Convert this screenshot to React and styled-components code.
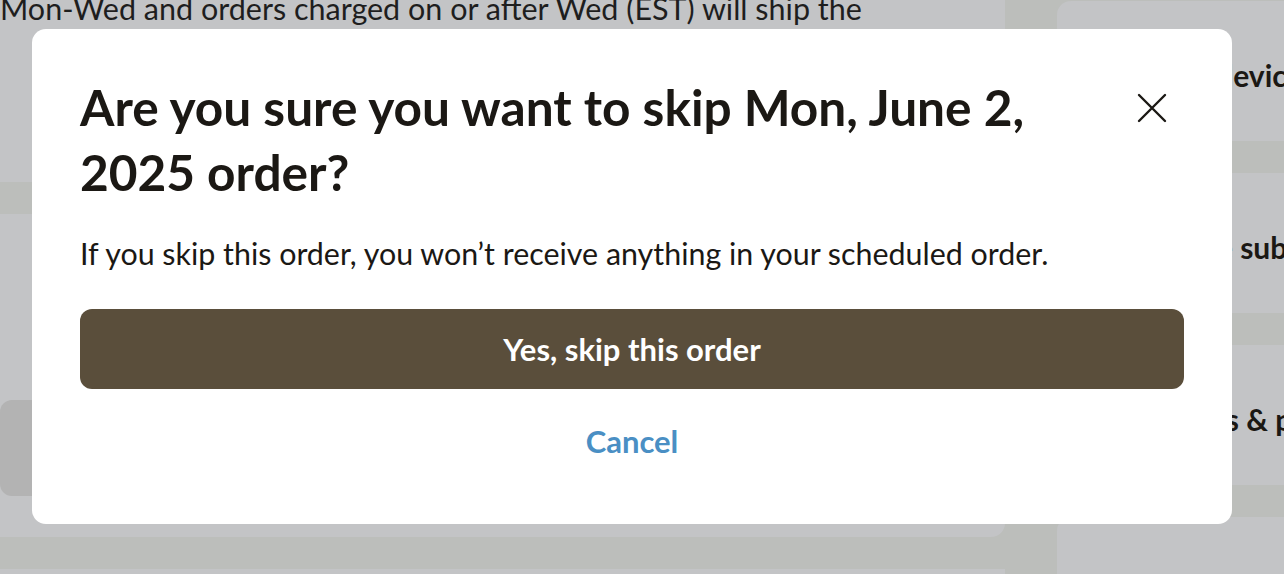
import styled, { createGlobalStyle } from "styled-components";

const GlobalStyle = createGlobalStyle`
  html, body {
    margin: 0;
    padding: 0;
    overflow: hidden;
    background: #bcbebb;
    font-family: "Lato", "Noto Sans", sans-serif;
    color: #1b1814;
  }
`;

const Page = styled.div`
  display: grid;
  grid-template-columns: 1005px 1fr;
  column-gap: 52px;
  height: 574px;
  overflow: hidden;
`;

const MainColumn = styled.div`
  display: flex;
  flex-direction: column;
  gap: 32px;
`;

const Panel = styled.section`
  flex-shrink: 0;
  background: #c3c4c6;
  border-radius: 0 0 14px 0;
  height: ${(p) => p.$height}px;
  padding-top: ${(p) => p.$padTop || 0}px;
  box-sizing: border-box;
  overflow: hidden;
`;

const Note = styled.p`
  margin: -46px 0 0;
  font-size: 30.5px;
  line-height: 36px;
  white-space: nowrap;
  color: #1e1e1e;
`;

const GreyBlock = styled.div`
  width: 300px;
  height: 96px;
  background: #b3b3b3;
  border-radius: 12px;
`;

const SideColumn = styled.div`
  display: flex;
  flex-direction: column;
  gap: 32px;
  padding-top: 1px;
`;

const SideCard = styled.div`
  height: 140px;
  flex-shrink: 0;
  box-sizing: border-box;
  background: #c3c4c6;
  border-radius: 14px 0 0 14px;
  display: flex;
  align-items: center;
  padding: 8px 0 0 45px;
  font-size: 30px;
  font-weight: 700;
  white-space: nowrap;
  color: #1b1814;
`;

const Overlay = styled.div`
  position: fixed;
  inset: 0;
  display: flex;
  align-items: flex-start;
  padding: 29px 0 0 32px;
`;

const Modal = styled.div`
  width: 1200px;
  height: 495px;
  box-sizing: border-box;
  background: #ffffff;
  border-radius: 14px;
  padding: 46px 48px 0;
`;

const Header = styled.div`
  display: flex;
  align-items: flex-start;
  gap: 40px;
`;

const Title = styled.h2`
  flex: 1;
  margin: 0;
  font-size: 49.6px;
  line-height: 65px;
  font-weight: 700;
  color: #1b1814;
`;

const CloseButton = styled.button`
  width: 64px;
  height: 64px;
  flex-shrink: 0;
  margin-top: 1px;
  border: none;
  background: none;
  padding: 0;
  display: flex;
  align-items: center;
  justify-content: center;
  color: #1b1814;
  cursor: pointer;
`;

const Message = styled.p`
  margin: 28px 0 0;
  font-size: 30.4px;
  line-height: 40px;
  color: #1b1814;
`;

const PrimaryButton = styled.button`
  display: block;
  width: 100%;
  height: 80px;
  margin-top: 36px;
  border: none;
  border-radius: 12px;
  background: #5a4e3b;
  color: #ffffff;
  font-family: inherit;
  font-size: 31px;
  font-weight: 700;
  cursor: pointer;
`;

const LinkButton = styled.button`
  display: block;
  margin: 32px auto 0;
  border: none;
  background: none;
  padding: 0;
  font-family: inherit;
  font-size: 31px;
  line-height: 40px;
  font-weight: 700;
  color: #4a8fc4;
  cursor: pointer;
`;

const CloseIcon = () => (
  <svg width="30" height="30" viewBox="0 0 30 30" fill="none">
    <path
      d="M2 2L28 28M28 2L2 28"
      stroke="currentColor"
      strokeWidth="2.4"
      strokeLinecap="round"
    />
  </svg>
);

export default function App() {
  return (
    <>
      <GlobalStyle />
      <Page>
        <MainColumn>
          <Panel $height={182}>
            <Note>
              Orders charged Thu-Sun will ship the following Mon, orders charged
              <br />
              Mon-Wed and orders charged on or after Wed (EST) will ship the
            </Note>
          </Panel>
          <Panel $height={323} $padTop={186}>
            <GreyBlock />
          </Panel>
          <Panel $height={200} />
        </MainColumn>
        <SideColumn>
          <SideCard>Manage devices</SideCard>
          <SideCard>Pause the subscription</SideCard>
          <SideCard>Addresses & payment</SideCard>
          <SideCard>Help center</SideCard>
        </SideColumn>
      </Page>
      <Overlay>
        <Modal role="dialog" aria-modal="true">
          <Header>
            <Title>Are you sure you want to skip Mon, June 2, 2025 order?</Title>
            <CloseButton aria-label="Close">
              <CloseIcon />
            </CloseButton>
          </Header>
          <Message>
            If you skip this order, you won’t receive anything in your scheduled
            order.
          </Message>
          <PrimaryButton>Yes, skip this order</PrimaryButton>
          <LinkButton>Cancel</LinkButton>
        </Modal>
      </Overlay>
    </>
  );
}
